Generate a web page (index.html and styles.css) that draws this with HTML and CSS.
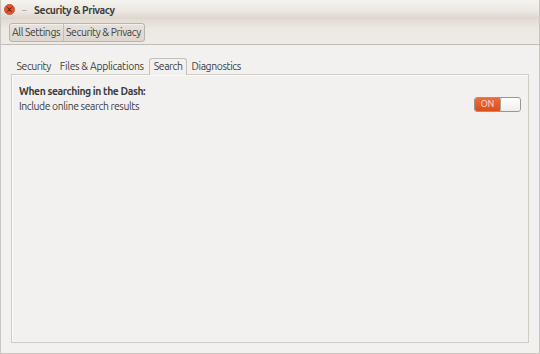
FILE: index.html
```html
<!DOCTYPE html>
<html lang="en">
<head>
    <meta charset="UTF-8">
    <title>Security &amp; Privacy</title>
    <link rel="stylesheet" href="styles.css">
</head>
<body>
    <div class="window">
        <!-- Title bar -->
        <div class="titlebar">
            <span class="close-btn">
                <svg width="11" height="11" viewBox="0 0 11 11">
                    <circle cx="5.5" cy="5.5" r="5" fill="#e4572e" stroke="#b8401e" stroke-width="0.8"/>
                    <path d="M3.6 3.6 L7.4 7.4 M7.4 3.6 L3.6 7.4" stroke="#7a2410" stroke-width="1.1" stroke-linecap="round"/>
                </svg>
            </span>
            <span class="minimize">–</span>
            <span class="title">Security &amp; Privacy</span>
        </div>

        <!-- Breadcrumb toolbar -->
        <div class="toolbar">
            <div class="crumbs">
                <button class="crumb">All Settings</button>
                <button class="crumb">Security &amp; Privacy</button>
            </div>
        </div>

        <!-- Content -->
        <div class="content">
            <div class="tabs">
                <span class="tab">Security</span>
                <span class="tab">Files &amp; Applications</span>
                <span class="tab active">Search</span>
                <span class="tab">Diagnostics</span>
            </div>
            <div class="panel">
                <div class="heading">When searching in the Dash:</div>
                <div class="row">
                    <span>Include online search results</span>
                    <span class="switch">
                        <span class="switch-on">ON</span>
                        <span class="switch-off"></span>
                    </span>
                </div>
            </div>
        </div>
    </div>
</body>
</html>
```

FILE: styles.css
```css
/* Page */
body {
    margin: 0;
    font-family: Ubuntu, "Noto Sans", "Open Sans", sans-serif;
    letter-spacing: -0.4px;
    background-color: #f2f1f0;
    color: #3c3c3c;
}

/* Window frame */
.window {
    width: 540px;
    height: 354px;
    box-sizing: border-box;
    border: 1px solid #c9c6c1;
    border-top: none;
    background-color: #f2f1f0;
    display: flex;
    flex-direction: column;
}

/* Title bar */
.titlebar {
    height: 19px;
    display: flex;
    align-items: center;
    padding-left: 3px;
    background: linear-gradient(#f5f3f0, #ebe7e2 60%, #dcd5cd);
    font-size: 10.4px;
}

.close-btn {
    display: flex;
    width: 11px;
    height: 11px;
}

.minimize {
    margin-left: 7px;
    color: #9a958f;
    font-size: 9px;
}

.title {
    margin-left: 8px;
    font-weight: bold;
    color: #3c3c3c;
}

/* Toolbar with breadcrumb */
.toolbar {
    height: 25px;
    display: flex;
    align-items: center;
    padding-left: 8px;
    background: linear-gradient(#e2dbd3, #ece8e2 40%, #eeebe7);
    border-bottom: 1px solid #c0bcb6;
}

.crumbs {
    display: flex;
    border: 1px solid #b9b4ad;
    border-radius: 3px;
    background: linear-gradient(#e6e1db, #dcd6cf);
    box-shadow: inset 0 1px 0 #f3f0ec;
    margin-top: 1px;
}

.crumb {
    font-family: inherit;
    font-size: 10.4px;
    letter-spacing: inherit;
    color: #3c3c3c;
    background: none;
    border: none;
    padding: 1px 3px 1px 2px;
    height: 17px;
    line-height: 13px;
}

.crumb + .crumb {
    border-left: 1px solid #c4beb7;
}

/* Content area */
.content {
    flex: 1;
    padding: 12px 10px 10px 10px;
    display: flex;
    flex-direction: column;
}

.tabs {
    display: flex;
    align-items: flex-end;
    padding-left: 1px;
    height: 17px;
    font-size: 10.4px;
}

.tab {
    padding: 0 4.5px 2px 4.5px;
    color: #3c3c3c;
}

.tab:nth-child(2) {
    padding: 0 5.5px 2px 4.5px;
    letter-spacing: -0.3px;
}

.tab.active {
    border: 1px solid #c4c0ba;
    border-bottom: none;
    border-radius: 3px 3px 0 0;
    background-color: #f2f1f0;
    padding: 1px 3.5px 3px 3.5px;
    margin-bottom: -1px;
    position: relative;
}

.panel {
    flex: 1;
    border: 1px solid #cfcbc5;
    box-shadow: inset 1px 1px 0 #fbfaf9;
    padding: 9px 7px;
    font-size: 10.4px;
}

.heading {
    font-weight: bold;
    line-height: 14px;
}

.row {
    display: flex;
    justify-content: space-between;
    align-items: center;
    line-height: 14px;
    margin-top: 1px;
}

/* Toggle switch */
.switch {
    display: flex;
    width: 45px;
    height: 13px;
    border: 1px solid #9b9690;
    border-radius: 3px;
    overflow: hidden;
    margin-top: -4px;
    letter-spacing: 0;
}

.switch-on {
    width: 25px;
    background: linear-gradient(#ec6c3a, #dd4f17);
    color: #fbe6dc;
    font-size: 9px;
    text-align: center;
    line-height: 13px;
}

.switch-off {
    flex: 1;
    background: linear-gradient(#ffffff, #efedeb);
    border-left: 1px solid #a8a29c;
    border-radius: 2px;
}
```
